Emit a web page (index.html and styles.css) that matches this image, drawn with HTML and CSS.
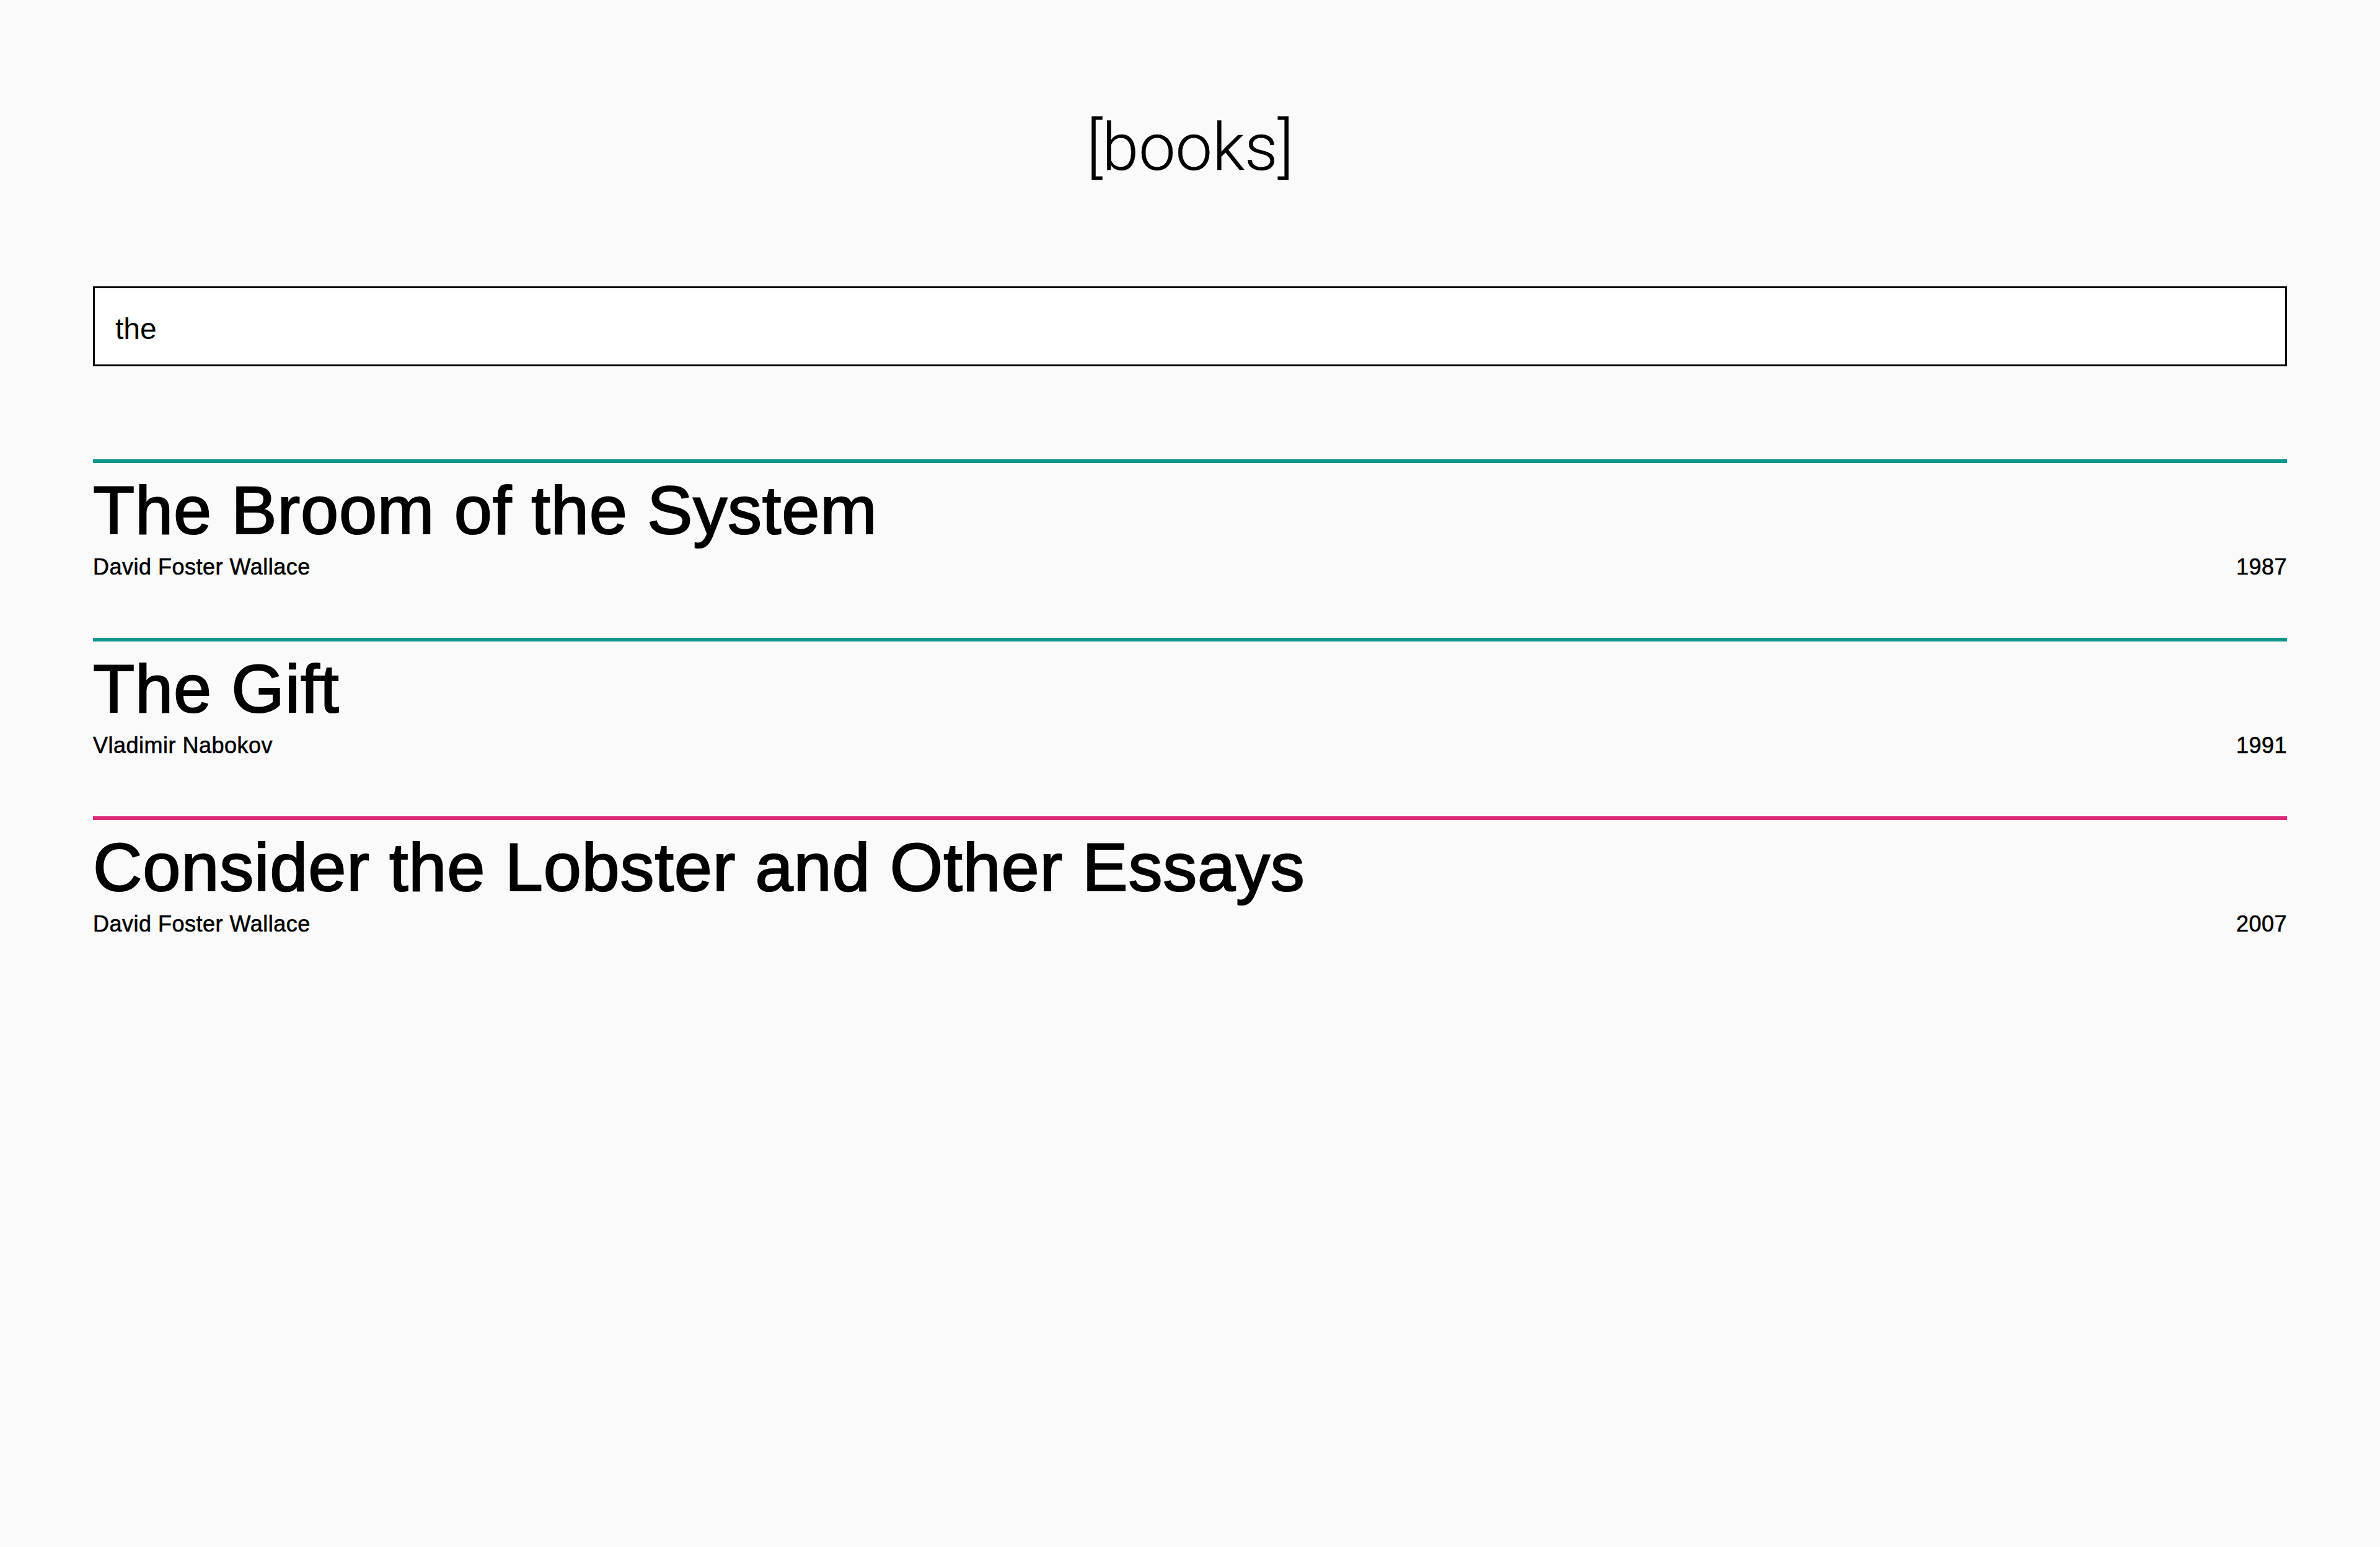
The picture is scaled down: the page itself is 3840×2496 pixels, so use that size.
FILE: index.html
```html
<!DOCTYPE html>
<html lang="en">
<head>
<meta charset="utf-8">
<title>[books]</title>
<link rel="stylesheet" href="styles.css">
</head>
<body>
<div class="page">
  <header class="header">
    <h1 class="logo">[books]</h1>
  </header>
  <div class="search">
    <input class="search-input" type="text" value="the">
  </div>
  <ul class="books">
    <li class="book book-teal">
      <h2 class="book-title">The Broom of the System</h2>
      <div class="book-meta">
        <span class="book-author">David Foster Wallace</span>
        <span class="book-year">1987</span>
      </div>
    </li>
    <li class="book book-teal">
      <h2 class="book-title">The Gift</h2>
      <div class="book-meta">
        <span class="book-author">Vladimir Nabokov</span>
        <span class="book-year">1991</span>
      </div>
    </li>
    <li class="book book-pink">
      <h2 class="book-title">Consider the Lobster and Other Essays</h2>
      <div class="book-meta">
        <span class="book-author">David Foster Wallace</span>
        <span class="book-year">2007</span>
      </div>
    </li>
  </ul>
</div>
</body>
</html>
```
FILE: styles.css
```css
html, body {
  margin: 0;
  padding: 0;
  background: #fafafa;
}

body {
  font-family: "Helvetica Neue", Helvetica, "Liberation Sans", Arial, sans-serif;
  color: #000;
}

.page {
  padding: 0 150px;
}

.header {
  padding-top: 178px;
  display: flex;
  justify-content: center;
}

.logo {
  margin: 0;
  font-family: Roboto, "Liberation Sans", sans-serif;
  font-weight: 300;
  font-size: 106px;
  line-height: 120px;
  -webkit-text-stroke: 0.4px #000;
}

.search {
  margin-top: 164px;
}

.search-input {
  display: block;
  width: 100%;
  box-sizing: border-box;
  height: 129px;
  margin: 0;
  padding: 37px 33px 30px;
  border: 3px solid #000;
  border-radius: 0;
  background: #fff;
  font-family: "Helvetica Neue", Helvetica, "Liberation Sans", Arial, sans-serif;
  font-size: 48px;
  line-height: 56px;
  color: #000;
  outline: none;
}

.books {
  list-style: none;
  margin: 150px 0 0;
  padding: 0;
}

.book {
  border-top: 6px solid #11968a;
  padding: 16px 0 93px;
}

.book-teal {
  border-top-color: #11968a;
}

.book-pink {
  border-top-color: #db2a7a;
}

.book-title {
  margin: 0;
  font-size: 110px;
  font-weight: 400;
  line-height: 120px;
  letter-spacing: 0.8px;
  -webkit-text-stroke: 2.2px #000;
}

.book-meta {
  margin-top: 11px;
  display: flex;
  justify-content: space-between;
  font-size: 36px;
  line-height: 42px;
  letter-spacing: 0.5px;
  -webkit-text-stroke: 0.6px #000;
}
```
